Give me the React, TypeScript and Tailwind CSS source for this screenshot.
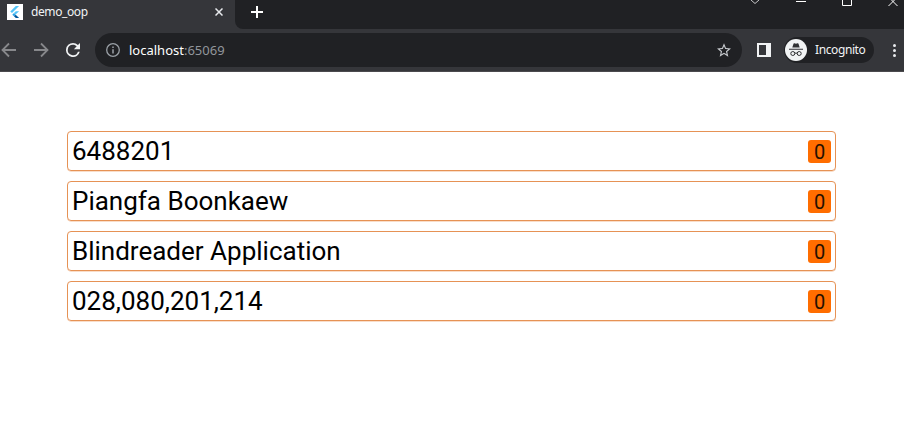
const rows = ['6488201', 'Piangfa Boonkaew', 'Blindreader Application', '028,080,201,214'];

function FlutterLogo() {
  return (
    <svg className="ml-[7px] h-4 w-4 shrink-0" viewBox="0 0 16 16">
      <path fill="#fff" d="M0 0h16v16H0z" />
      <path fill="#54c5f8" d="M8.8 2h3.3L5 9 3.3 7.4z" />
      <path fill="#54c5f8" d="M8.8 7.2h3.3L8.6 10.6 7 9z" />
      <path fill="#29a5e8" d="M7 9l1.700 1.700L7 12.300 5.300 10.700z" />
      <path fill="#01579b" d="M7 12.300l1.700-1.600 3.400 3.300H8.800z" />
    </svg>
  );
}

function TabStrip() {
  return (
    <div className="flex h-[29px] bg-[#202124]">
      <div className="flex h-full w-[235px] shrink-0 items-start bg-[#35363a] pt-1">
        <FlutterLogo />
        <span className="ml-2 flex-1 text-[12px] leading-4 tracking-[-0.4px] text-[#f1f3f4]">demo_oop</span>
        <svg className="mr-3 mt-1 h-2 w-2" viewBox="0 0 8 8" fill="none" stroke="#e8eaed" strokeWidth="1.500">
          <path d="M.5.5l7 7M7.500.5l-7 7" />
        </svg>
      </div>
      <div className="h-full w-2 bg-[#35363a]">
        <div className="h-full w-full rounded-bl-[8px] bg-[#202124]" />
      </div>
      <svg className="ml-2 mt-[6px] h-3 w-3" viewBox="0 0 12 12" stroke="#fff" strokeWidth="2">
        <path d="M6 0v12M0 6h12" />
      </svg>
      <svg className="ml-auto h-[7px] w-[158px]" viewBox="746 0 158 7" fill="none" stroke="#fff" strokeWidth="1">
        <path d="M751 0l4 3.500L759 0" stroke="#c5c6c8" />
        <path d="M796 1.500h10M842.500 0v5.500h9V0M888.500 6l6-6M891.500 0l6 6" />
      </svg>
    </div>
  );
}

function Incognito() {
  return (
    <svg className="h-[22px] w-[22px] shrink-0" viewBox="0 0 22 22">
      <circle cx="11" cy="11" r="11" fill="#f1f3f4" />
      <path fill="#303134" d="M7.300 8.500l1.200-3.700q.2-.7.900-.5l1.600.4 1.600-.4q.7-.2.900.5l1.200 3.700zM4 9.800h14v1H4z" />
      <g fill="none" stroke="#303134" strokeWidth="1">
        <circle cx="7.800" cy="14.500" r="2" />
        <circle cx="14.200" cy="14.500" r="2" />
        <path d="M9.800 14.300q1.200-.6 2.400 0" />
      </g>
    </svg>
  );
}

function Toolbar() {
  return (
    <div className="flex h-[43px] items-center border-b border-[#4b4a4e] bg-[#35363a]">
      <svg className="h-4 w-[49px] shrink-0" viewBox="0 0 49 16" fill="none" stroke="#87888b" strokeWidth="1.800">
        <path d="M16 8H3M9 1.500L2.500 8 9 14.500M34 8h13M41 1.500L47.500 8 41 14.500" />
      </svg>
      <svg className="ml-[17px] h-[14px] w-[14px] shrink-0" viewBox="4 4 16 16" fill="#f1f3f4">
        <path d="M17.650 6.350A7.958 7.958 0 0 0 12 4a8 8 0 1 0 7.730 10h-2.080A6 6 0 1 1 12 6c1.660 0 3.140.69 4.220 1.780L13 11h7V4l-2.350 2.350z" />
      </svg>
      <div className="ml-[15px] flex h-[34px] w-[647px] shrink-0 items-center rounded-full bg-[#202124] pl-[11px] pr-[11px]">
        <svg className="h-[14px] w-[14px]" viewBox="0 0 14 14" fill="none" stroke="#9aa0a6" strokeWidth="1.300">
          <circle cx="7" cy="7" r="6.300" />
          <path d="M7 6.200v4.300M7 3.500v1.500" strokeWidth="1.500" />
        </svg>
        <span className="ml-[9px] flex-1 pt-px text-[13px] text-white">
          localhost<span className="text-[#92969b]">:65069</span>
        </span>
        <svg className="h-[14px] w-[14px]" viewBox="2 2 20 19" fill="#c7cace">
          <path d="M22 9.240l-7.190-.62L12 2 9.190 8.630 2 9.240l5.460 4.730L5.820 21 12 17.270 18.180 21l-1.630-7.030L22 9.240zM12 15.400l-3.760 2.270 1-4.280-3.320-2.880 4.380-.38L12 6.100l1.710 4.040 4.380.38-3.320 2.880 1 4.280L12 15.400z" />
        </svg>
      </div>
      <div className="ml-[15px] h-[14px] w-[14px] shrink-0 border-2 border-r-[5px] border-[#f1f3f4]" />
      <div className="ml-[13px] flex h-[26px] w-[90px] shrink-0 items-center rounded-full bg-[#202124] pl-[1px]">
        <Incognito />
        <span className="ml-2 text-[12px] tracking-[-0.4px] text-[#f1f3f4]">Incognito</span>
      </div>
      <div className="ml-[19px] flex shrink-0 flex-col gap-[2px]">
        {[0, 1, 2].map((dot) => (
          <i key={dot} className="h-[3px] w-[3px] rounded-full bg-[#e8eaed]" />
        ))}
      </div>
    </div>
  );
}

export default function App() {
  return (
    <div className="h-[423px] w-[904px] overflow-hidden bg-white font-['Noto_Sans',sans-serif]">
      <TabStrip />
      <Toolbar />
      <main className="flex flex-col gap-[10px] pl-[67px] pr-[68px] pt-[59px] font-['Roboto',sans-serif] text-black">
        {rows.map((row) => (
          <div key={row} className="flex h-[40px] items-center justify-between rounded-[4px] border border-[#e69255] pl-[4px] pr-[4px] shadow-[0_0.500px_0_#f3bd96]">
            <span className="text-[26px] leading-none">{row}</span>
            <span className="flex h-[23px] w-[23px] items-center justify-center rounded-[3px] bg-[#ff6d00] pt-px text-[20px] leading-none text-[#251000]">0</span>
          </div>
        ))}
      </main>
    </div>
  );
}
